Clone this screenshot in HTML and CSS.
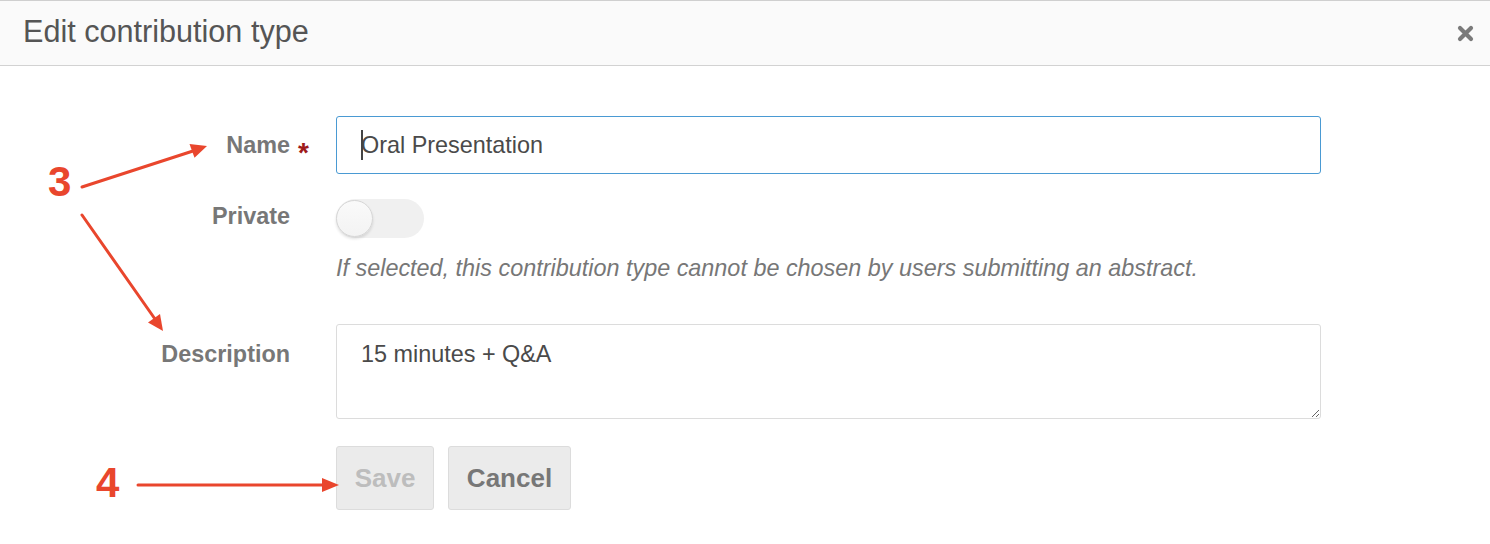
FILE: index.html
```html
<!DOCTYPE html>
<html lang="en">
<head>
<meta charset="utf-8">
<title>Edit contribution type</title>
<link rel="stylesheet" href="styles.css">
</head>
<body>
<div class="page">
  <header class="dlg-header">
    <h1 class="dlg-title">Edit contribution type</h1>
    <button class="dlg-close" type="button" aria-label="Close">
      <svg width="17" height="17" viewBox="0 0 17 17"><path d="M3 3 L14 14 M14 3 L3 14" stroke="#7a7a7a" stroke-width="4.2" stroke-linecap="round"/></svg>
    </button>
  </header>

  <form class="dlg-body">
    <div class="row row-name">
      <label class="lbl">Name<span class="req">*</span></label>
      <div class="ctl">
        <div class="text-input"><span class="caret"></span>Oral Presentation</div>
      </div>
    </div>

    <div class="row row-private">
      <label class="lbl">Private</label>
      <div class="ctl">
        <span class="toggle"><span class="knob"></span></span>
        <p class="help">If selected, this contribution type cannot be chosen by users submitting an abstract.</p>
      </div>
    </div>

    <div class="row row-desc">
      <label class="lbl">Description</label>
      <div class="ctl">
        <textarea class="textarea" readonly>15 minutes + Q&amp;A</textarea>
      </div>
    </div>

    <div class="row row-actions">
      <div class="lbl"></div>
      <div class="ctl btns">
        <button class="btn btn-save" type="button" disabled>Save</button>
        <button class="btn btn-cancel" type="button">Cancel</button>
      </div>
    </div>
  </form>

  <div class="annot">
    <svg class="annot-svg" width="1490" height="544" viewBox="0 0 1490 544">
      <g stroke="#e9462d" stroke-width="3" stroke-linecap="round" fill="none">
        <line x1="82" y1="187" x2="193" y2="151"/>
        <line x1="82" y1="215" x2="155" y2="319"/>
        <line x1="138" y1="485" x2="324" y2="485"/>
      </g>
      <g fill="#e9462d">
        <polygon points="207,146 194.5,157.8 189.5,144"/>
        <polygon points="163,331 160,314 148,322.5"/>
        <polygon points="339,485 322,478 322,492"/>
      </g>
    </svg>
    <span class="step step-3">3</span>
    <span class="step step-4">4</span>
  </div>
</div>
</body>
</html>
```

FILE: styles.css
```css
* { box-sizing: border-box; }

body {
  margin: 0;
  background: #fff;
  font-family: "Liberation Sans", Arial, sans-serif;
}

.page {
  position: relative;
  width: 1490px;
  height: 544px;
  overflow: hidden;
  background: #fff;
}

/* header */
.dlg-header {
  display: flex;
  align-items: flex-start;
  justify-content: space-between;
  height: 66px;
  border-top: 1px solid #cfcfcf;
  border-bottom: 1px solid #d2d2d2;
  background: #fafafa;
  padding: 12px 16px 0 23px;
}

.dlg-title {
  margin: 0;
  font-size: 30.6px;
  line-height: 36px;
  font-weight: normal;
  color: #555;
}

.dlg-close {
  margin-top: 12px;
  padding: 0;
  border: 0;
  background: none;
  width: 17px;
  height: 17px;
  display: block;
}
.dlg-close svg { display: block; }

/* form */
.dlg-body {
  margin: 0;
  padding: 50px 169px 0 0;
}

.row {
  display: grid;
  grid-template-columns: 290px 1fr;
  column-gap: 46px;
  align-items: start;
}

.lbl {
  display: block;
  text-align: right;
  font-size: 23.4px;
  line-height: 33px;
  font-weight: bold;
  color: #777;
  position: relative;
}

.req {
  position: absolute;
  right: -19px;
  top: 7px;
  color: #9e1b1b;
  font-size: 28px;
  line-height: 33px;
  font-weight: bold;
}

.row-name { align-items: center; }

.text-input {
  position: relative;
  height: 58px;
  border: 1px solid #4a9ad3;
  border-radius: 3px;
  padding: 0 24px;
  display: flex;
  align-items: center;
  font-size: 23.4px;
  line-height: 33px;
  color: #4a4a4a;
}

.caret {
  position: absolute;
  left: 24px;
  top: 13px;
  width: 2px;
  height: 30px;
  background: #444;
}

.row-private { margin-top: 25px; }
.row-private .lbl { padding-top: 1px; }

.toggle {
  display: block;
  position: relative;
  width: 88px;
  height: 39px;
  border-radius: 20px;
  background: #f0f0f0;
}

.knob {
  position: absolute;
  left: 0;
  top: 1px;
  width: 37px;
  height: 37px;
  border-radius: 50%;
  background: linear-gradient(#fafafa, #f3f3f3);
  border: 1px solid #d6d6d6;
  box-shadow: 0 2px 3px rgba(0, 0, 0, 0.12);
}

.help {
  margin: 14px 0 0;
  font-size: 23.4px;
  line-height: 33px;
  font-style: italic;
  color: #777;
}

.row-desc { margin-top: 39px; }
.row-desc .lbl { padding-top: 13.5px; }

.textarea {
  display: block;
  width: 100%;
  height: 95px;
  margin: 0;
  border: 1px solid #dcdcdc;
  border-radius: 3px;
  padding: 12.5px 24px;
  font-family: "Liberation Sans", Arial, sans-serif;
  font-size: 23.4px;
  line-height: 33px;
  color: #4a4a4a;
  background: #fff;
  resize: vertical;
  outline: none;
}

.row-actions { margin-top: 27px; }

.btns {
  display: flex;
  gap: 14px;
}

.btn {
  height: 64px;
  padding: 0;
  border: 1px solid #dcdcdc;
  border-radius: 3px;
  background: #ebebeb;
  font-family: "Liberation Sans", Arial, sans-serif;
  font-size: 26px;
  font-weight: bold;
  color: #777;
}

.btn-save {
  width: 98px;
  color: #bdbdbd;
}

.btn-cancel {
  width: 123px;
}

/* annotations overlay */
.annot {
  position: absolute;
  inset: 0;
  pointer-events: none;
}

.annot-svg {
  position: absolute;
  left: 0;
  top: 0;
}

.step {
  position: absolute;
  font-size: 42px;
  line-height: 42px;
  font-weight: bold;
  color: #e9462d;
}

.step-3 { left: 48px; top: 161px; }
.step-4 { left: 96px; top: 462px; }
```
